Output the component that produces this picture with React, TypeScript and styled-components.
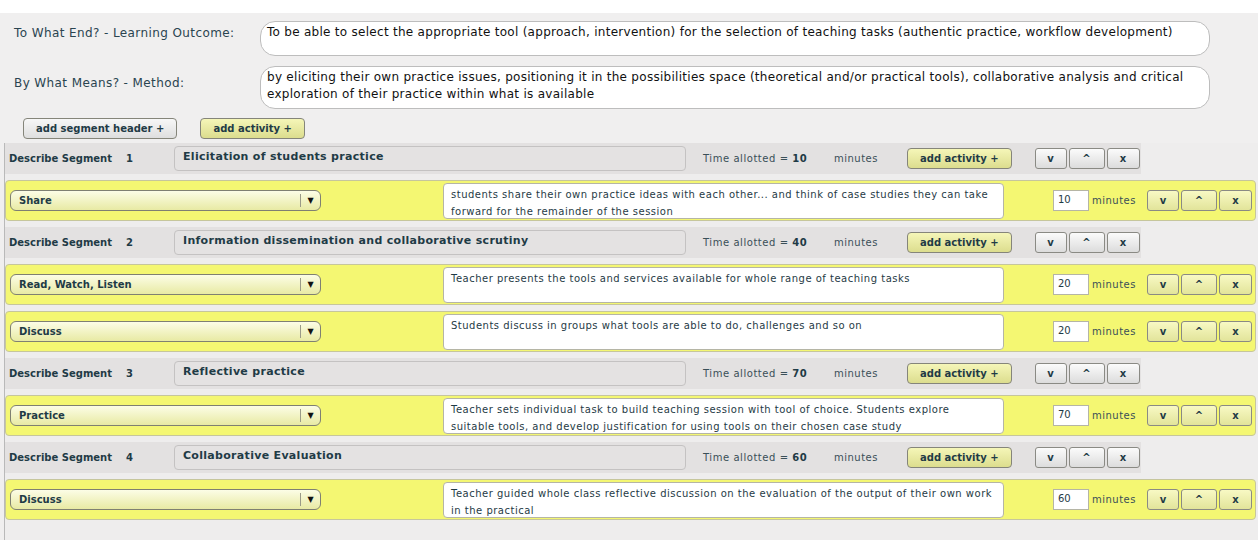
import React from "react";
import styled, { createGlobalStyle } from "styled-components";

const GlobalStyle = createGlobalStyle`
  body {
    margin: 0;
    background: #ffffff;
    font-family: "DejaVu Sans", Verdana, sans-serif;
    color: #1f3b46;
  }
`;

const Page = styled.div`
  padding-top: 13px;
  width: 1258px;
  height: 553px;
  box-sizing: border-box;
  background: #ffffff;
`;

const Main = styled.div`
  background: #f0efef;
  padding-top: 8px;
`;

const FieldRow = styled.div`
  display: flex;
  align-items: flex-start;
  margin-bottom: 10px;
`;

const FieldLabel = styled.label<{ $top: number }>`
  width: 246px;
  padding: ${(p) => p.$top}px 0 0 14px;
  font-size: 12px;
  letter-spacing: 0.4px;
  color: #2a4450;
`;

const FieldText = styled.div<{ $h: number }>`
  width: 950px;
  height: ${(p) => p.$h}px;
  box-sizing: border-box;
  background: #fff;
  border: 1px solid #bdbdbd;
  border-radius: 15px;
  padding: 2px 6px;
  font-size: 12px;
  line-height: 17px;
  letter-spacing: 0.28px;
  color: #111;
`;

const Toolbar = styled.div`
  display: flex;
  gap: 23px;
  padding: 0 0 4px 23px;
  margin-top: -1px;
`;

const PillButton = styled.button<{ $tone?: "grey" | "yellow" }>`
  height: 21px;
  box-sizing: border-box;
  border: 1px solid #85857a;
  border-radius: 4px;
  padding: 0 12px;
  font-family: inherit;
  font-size: 10px;
  font-weight: bold;
  color: #1f3b46;
  background: ${(p) =>
    p.$tone === "yellow"
      ? "linear-gradient(#f5f6b8, #dcdd8e)"
      : "linear-gradient(#f7f7f7, #dedede)"};
`;

const SegmentList = styled.div`
  margin-left: 4px;
  border-left: 1px solid #b9b9b9;
  background: #eeeded;
  display: flex;
  flex-direction: column;
  gap: 6px;
  padding-bottom: 20px;
`;

const SegmentHeader = styled.div`
  width: 1136px;
  height: 31px;
  background: #e3e1e1;
  display: flex;
  align-items: center;
  font-size: 10px;
  font-weight: bold;
`;

const HeaderLabel = styled.span`
  width: 121px;
  padding-left: 4px;
  box-sizing: border-box;
`;

const HeaderNum = styled.span`
  width: 48px;
`;

const TitleBox = styled.div`
  width: 512px;
  height: 25px;
  box-sizing: border-box;
  border: 1px solid #c4c2c2;
  border-radius: 4px;
  background: #e4e2e2;
  padding: 3px 8px;
  font-size: 11px;
  letter-spacing: 0.3px;
  margin-right: 17px;
`;

const TimeText = styled.span`
  width: 131px;
  font-weight: normal;
  font-size: 10px;
  letter-spacing: 0.55px;
  color: #3a4f58;
  b {
    color: #1f3b46;
  }
`;

const MinutesText = styled.span`
  width: 73px;
  font-weight: normal;
  font-size: 10px;
  letter-spacing: 0.5px;
  color: #3a4f58;
`;

const ButtonGroup = styled.div<{ $ml: number }>`
  display: flex;
  gap: 2px;
  margin-left: ${(p) => p.$ml}px;
`;

const SmallButton = styled.button<{ $w: number; $tone?: "grey" | "yellow" }>`
  width: ${(p) => p.$w}px;
  height: 21px;
  box-sizing: border-box;
  border: 1px solid #8a8a84;
  border-radius: 3px;
  padding: 0;
  font-family: inherit;
  font-size: 10px;
  font-weight: bold;
  color: #1f3b46;
  background: ${(p) =>
    p.$tone === "yellow"
      ? "linear-gradient(#f8f9c4, #e2e49a)"
      : "linear-gradient(#fbfbfb, #dcdcdc)"};
`;

const ActivityRow = styled.div`
  width: 1251px;
  height: 41px;
  box-sizing: border-box;
  background: #f4f772;
  border: 1px solid #c6c69c;
  border-radius: 4px;
  display: flex;
  align-items: center;
  padding-left: 4px;
`;

const SelectBox = styled.div`
  width: 311px;
  height: 21px;
  box-sizing: border-box;
  border: 1px solid #7f8072;
  border-radius: 6px;
  background: linear-gradient(#fcfde6, #e8eaa4);
  display: flex;
  align-items: center;
  font-size: 10px;
  font-weight: bold;
  padding-left: 8px;
  margin-right: 122px;
`;

const SelectText = styled.span`
  flex: 1;
`;

const SelectArrow = styled.span`
  width: 19px;
  height: 13px;
  border-left: 1px solid #9a9a88;
  display: flex;
  align-items: center;
  justify-content: center;
  font-size: 8px;
  color: #111;
`;

const ActivityText = styled.div`
  width: 561px;
  height: 36px;
  box-sizing: border-box;
  background: #fff;
  border: 1px solid #b5b5a5;
  border-radius: 4px;
  padding: 2px 7px;
  font-size: 10px;
  line-height: 17px;
  letter-spacing: 0.5px;
  color: #1f3b46;
  margin-right: 49px;
`;

const MinInput = styled.div`
  width: 36px;
  height: 21px;
  box-sizing: border-box;
  background: #fff;
  border: 1px solid #b5b5a5;
  padding: 3px 4px;
  font-size: 10px;
  color: #1f3b46;
  margin-right: 3px;
`;

const RowMinutes = styled.span`
  width: 55px;
  font-size: 10px;
  letter-spacing: 0.5px;
  color: #3a4f58;
`;

type Activity = { kind: string; text: string; mins: number };
type Segment = { n: number; title: string; time: number; activities: Activity[] };

const segments: Segment[] = [
  {
    n: 1,
    title: "Elicitation of students practice",
    time: 10,
    activities: [
      {
        kind: "Share",
        text: "students share their own practice ideas with each other... and think of case studies they can take forward for the remainder of the session",
        mins: 10,
      },
    ],
  },
  {
    n: 2,
    title: "Information dissemination and collaborative scrutiny",
    time: 40,
    activities: [
      {
        kind: "Read, Watch, Listen",
        text: "Teacher presents the tools and services available for whole range of teaching tasks",
        mins: 20,
      },
      {
        kind: "Discuss",
        text: "Students discuss in groups what tools are able to do, challenges and so on",
        mins: 20,
      },
    ],
  },
  {
    n: 3,
    title: "Reflective practice",
    time: 70,
    activities: [
      {
        kind: "Practice",
        text: "Teacher sets individual task to build teaching session with tool of choice. Students explore suitable tools, and develop justification for using tools on their chosen case study",
        mins: 70,
      },
    ],
  },
  {
    n: 4,
    title: "Collaborative Evaluation",
    time: 60,
    activities: [
      {
        kind: "Discuss",
        text: "Teacher guided whole class reflective discussion on the evaluation of the output of their own work in the practical",
        mins: 60,
      },
    ],
  },
];

const MoveButtons: React.FC<{ tone?: "grey" | "yellow"; ml: number }> = ({ tone, ml }) => (
  <ButtonGroup $ml={ml}>
    <SmallButton $w={32} $tone={tone}>v</SmallButton>
    <SmallButton $w={36} $tone={tone}>^</SmallButton>
    <SmallButton $w={33} $tone={tone}>x</SmallButton>
  </ButtonGroup>
);

const App: React.FC = () => {
  return (
    <Page>
      <GlobalStyle />
      <Main>
        <FieldRow>
          <FieldLabel $top={5}>To What End? - Learning Outcome:</FieldLabel>
          <FieldText $h={35}>
            To be able to select the appropriate tool (approach, intervention) for the selection of
            teaching tasks (authentic practice, workflow development)
          </FieldText>
        </FieldRow>
        <FieldRow>
          <FieldLabel $top={10}>By What Means? - Method:</FieldLabel>
          <FieldText $h={43}>
            by eliciting their own practice issues, positioning it in the possibilities space
            (theoretical and/or practical tools), collaborative analysis and critical exploration of
            their practice within what is available
          </FieldText>
        </FieldRow>
        <Toolbar>
          <PillButton>add segment header +</PillButton>
          <PillButton $tone="yellow">add activity +</PillButton>
        </Toolbar>
        <SegmentList>
          {segments.map((s) => (
            <React.Fragment key={s.n}>
              <SegmentHeader>
                <HeaderLabel>Describe Segment</HeaderLabel>
                <HeaderNum>{s.n}</HeaderNum>
                <TitleBox>{s.title}</TitleBox>
                <TimeText>
                  Time allotted = <b>{s.time}</b>
                </TimeText>
                <MinutesText>minutes</MinutesText>
                <PillButton $tone="yellow">add activity +</PillButton>
                <MoveButtons ml={23} />
              </SegmentHeader>
              {s.activities.map((a, i) => (
                <ActivityRow key={i}>
                  <SelectBox>
                    <SelectText>{a.kind}</SelectText>
                    <SelectArrow>▼</SelectArrow>
                  </SelectBox>
                  <ActivityText>{a.text}</ActivityText>
                  <MinInput>{a.mins}</MinInput>
                  <RowMinutes>minutes</RowMinutes>
                  <MoveButtons tone="yellow" ml={0} />
                </ActivityRow>
              ))}
            </React.Fragment>
          ))}
        </SegmentList>
      </Main>
    </Page>
  );
};

export default App;
